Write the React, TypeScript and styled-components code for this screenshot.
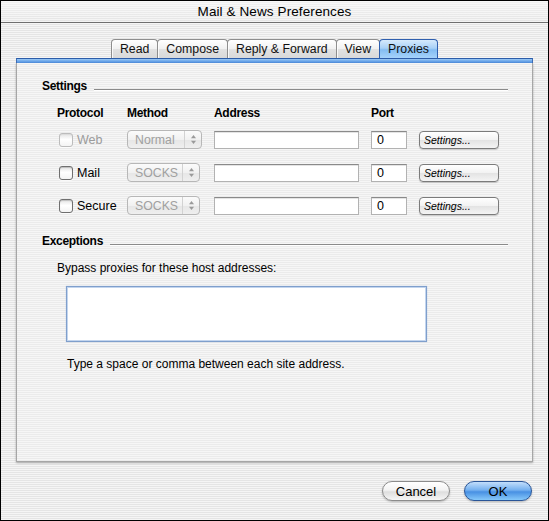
import React from "react";
import styled, { createGlobalStyle, css } from "styled-components";

const GlobalStyle = createGlobalStyle`
  html, body { margin: 0; padding: 0; background: #ffffff; }
  body { font-family: "Liberation Sans", Arial, sans-serif; color: #000; }
  * { box-sizing: border-box; }
`;

const stripes = (a: string, b: string) =>
  `repeating-linear-gradient(to bottom, ${a} 0px, ${a} 1px, ${b} 1px, ${b} 2px)`;

const Window = styled.div`
  width: 549px;
  height: 521px;
  border: 1px solid #000;
  background: ${stripes("#f5f5f5", "#e5e5e5")};
  display: flex;
  flex-direction: column;
  overflow: hidden;
`;

const TitleBar = styled.div`
  height: 22px;
  flex: 0 0 22px;
  border-bottom: 1px solid #6f6f6f;
  border-radius: 4px 4px 0 0;
  background: linear-gradient(to bottom, rgba(255, 255, 255, 0.55), rgba(255, 255, 255, 0.1)),
    ${stripes("#f2f2f2", "#e2e2e2")};
  display: flex;
  align-items: center;
  justify-content: center;
  font-size: 13.5px;
  letter-spacing: 0.1px;
`;

const Content = styled.div`
  display: flex;
  flex-direction: column;
  padding: 16px 15px 0 15px;
`;

const TabBar = styled.div`
  display: flex;
  justify-content: center;
  height: 19px;
`;

const Tab = styled.div<{ $active?: boolean }>`
  height: 19px;
  padding: 0 8px;
  margin-left: -1px;
  display: flex;
  align-items: center;
  font-size: 12.3px;
  border: 1px solid #8e8e8e;
  border-bottom: none;
  border-radius: 4px 4px 0 0;
  background: linear-gradient(to bottom, #ffffff 0%, #f1f1f1 50%, #e2e2e2 51%, #d9d9d9 100%);
  box-shadow: inset 1px 0 0 rgba(255, 255, 255, 0.8);
  color: #111;
  &:first-child {
    margin-left: 0;
  }
  ${(p) =>
    p.$active &&
    css`
      position: relative;
      z-index: 1;
      border-color: #2f5fae;
      background: linear-gradient(to bottom, #d6eafc 0%, #a9d1f7 45%, #84bdf2 55%, #a6d3fb 100%);
      box-shadow: none;
    `}
`;

const BlueStrip = styled.div`
  height: 5px;
  border-top: 1px solid #2c5ca8;
  border-left: 1px solid #3d6cb5;
  border-right: 1px solid #3d6cb5;
  background: linear-gradient(to bottom, #9ccaf5 0%, #6ea8ea 50%, #4d8bdc 100%);
`;

const Panel = styled.div`
  height: 399px;
  border: 1px solid #a6a6a6;
  border-top: none;
  background: ${stripes("#f6f6f6", "#ebebeb")};
  box-shadow: 0 1px 2px rgba(0, 0, 0, 0.28);
  padding: 16px 24px 0 25px;
  display: flex;
  flex-direction: column;
`;

const SectionHeader = styled.div<{ $gap?: number }>`
  display: flex;
  align-items: flex-start;
  height: 14px;
  line-height: 14px;
  font-size: 12px;
  font-weight: bold;
  letter-spacing: -0.3px;
  margin-top: ${(p) => p.$gap ?? 0}px;
`;

const Rule = styled.div`
  flex: 1;
  height: 1px;
  margin-top: 10px;
  margin-left: 7px;
  background: #8a8a8a;
  box-shadow: 0 1px 0 #ffffff;
`;

const Table = styled.div`
  margin-top: 10px;
  margin-left: 15px;
  display: grid;
  grid-template-columns: 70px 87px 157px 48px 80px;
  grid-template-rows: 20px repeat(3, 33px);
  align-items: center;
`;

const ColHead = styled.div`
  font-size: 12px;
  font-weight: bold;
  letter-spacing: -0.3px;
`;

const ProtocolCell = styled.label<{ $disabled?: boolean }>`
  display: flex;
  align-items: center;
  gap: 4px;
  padding-left: 2px;
  font-size: 12.5px;
  color: ${(p) => (p.$disabled ? "#9b9b9b" : "#000")};
`;

const CheckBox = styled.span<{ $disabled?: boolean }>`
  width: 14px;
  height: 14px;
  border: 1px solid ${(p) => (p.$disabled ? "#bcbcbc" : "#6f6f6f")};
  border-radius: 3px;
  background: linear-gradient(to bottom, #e4e4e4 0%, #ffffff 45%, #f4f4f4 100%);
  box-shadow: inset 0 1px 1px rgba(0, 0, 0, ${(p) => (p.$disabled ? 0.05 : 0.18)}),
    0 1px 0 rgba(255, 255, 255, 0.7);
`;

const Popup = styled.div<{ $w: number }>`
  width: ${(p) => p.$w}px;
  height: 19px;
  display: flex;
  align-items: stretch;
  border: 1px solid #b7b7b7;
  border-radius: 4px;
  background: linear-gradient(to bottom, #fbfbfb 0%, #f1f1f1 50%, #e6e6e6 51%, #efefef 100%);
  color: #a0a0a0;
  font-size: 12.3px;
`;

const PopupLabel = styled.span`
  flex: 1;
  display: flex;
  align-items: center;
  padding-left: 7px;
`;

const PopupArrows = styled.span`
  width: 17px;
  border-left: 1px solid #d2d2d2;
  display: flex;
  align-items: center;
  justify-content: center;
`;

const TextField = styled.div<{ $w: number }>`
  width: ${(p) => p.$w}px;
  height: 18px;
  background: #ffffff;
  border: 1px solid #b2b2b2;
  border-top-color: #8a8a8a;
  box-shadow: inset 0 1px 0 #e4e4e4;
  font-size: 12.5px;
  padding-left: 5px;
  display: flex;
  align-items: center;
`;

const SmallButton = styled.div`
  width: 80px;
  height: 18px;
  border: 1px solid #7b7b7b;
  border-radius: 4px;
  background: linear-gradient(to bottom, #ffffff 0%, #f2f2f2 50%, #e3e3e3 51%, #f4f4f4 100%);
  box-shadow: 0 1px 1px rgba(0, 0, 0, 0.18);
  font-size: 10.5px;
  font-style: italic;
  padding-left: 4px;
  display: flex;
  align-items: center;
`;

const Caption = styled.div<{ $top: number; $left: number }>`
  margin-top: ${(p) => p.$top}px;
  margin-left: ${(p) => p.$left}px;
  font-size: 12px;
  line-height: 14px;
`;

const HostArea = styled.div`
  margin-top: 11px;
  margin-left: 24px;
  width: 361px;
  height: 56px;
  background: #ffffff;
  border: 1px solid #7f9fcc;
  box-shadow: inset 0 0 0 1px #c3d5ee, 0 0 1px rgba(80, 120, 190, 0.4);
`;

const Footer = styled.div`
  display: flex;
  justify-content: flex-end;
  gap: 14px;
  margin-top: 19px;
  padding-right: 1px;
`;

const PillButton = styled.div<{ $primary?: boolean }>`
  width: 68px;
  height: 20px;
  border-radius: 10px;
  display: flex;
  align-items: center;
  justify-content: center;
  font-size: 13px;
  border: 1px solid #8b8b8b;
  background: linear-gradient(to bottom, #ffffff 0%, #f3f3f3 45%, #dedede 55%, #f6f6f6 100%);
  box-shadow: 0 1px 2px rgba(0, 0, 0, 0.25);
  ${(p) =>
    p.$primary &&
    css`
      border-color: #2a5597;
      background: linear-gradient(to bottom, #c2defb 0%, #74b0ef 45%, #4890e3 55%, #86c8fa 100%);
    `}
`;

const Arrows = () => (
  <svg width="7" height="11" viewBox="0 0 7 11">
    <path d="M3.5 1 L6 4.2 L1 4.2 Z" fill="#9a9a9a" />
    <path d="M3.5 10 L6 6.8 L1 6.8 Z" fill="#9a9a9a" />
  </svg>
);

const rows = [
  { name: "Web", method: "Normal", disabled: true, popupW: 75 },
  { name: "Mail", method: "SOCKS", disabled: false, popupW: 73 },
  { name: "Secure", method: "SOCKS", disabled: false, popupW: 73 },
];

const tabs = ["Read", "Compose", "Reply & Forward", "View", "Proxies"];

export default function App() {
  return (
    <>
      <GlobalStyle />
      <Window>
        <TitleBar>Mail &amp; News Preferences</TitleBar>
        <Content>
          <TabBar>
            {tabs.map((t) => (
              <Tab key={t} $active={t === "Proxies"}>
                {t}
              </Tab>
            ))}
          </TabBar>
          <BlueStrip />
          <Panel>
            <SectionHeader>
              Settings
              <Rule />
            </SectionHeader>
            <Table>
              <ColHead>Protocol</ColHead>
              <ColHead>Method</ColHead>
              <ColHead>Address</ColHead>
              <ColHead>Port</ColHead>
              <span />
              {rows.map((r) => (
                <React.Fragment key={r.name}>
                  <ProtocolCell $disabled={r.disabled}>
                    <CheckBox $disabled={r.disabled} />
                    {r.name}
                  </ProtocolCell>
                  <Popup $w={r.popupW}>
                    <PopupLabel>{r.method}</PopupLabel>
                    <PopupArrows>
                      <Arrows />
                    </PopupArrows>
                  </Popup>
                  <TextField $w={145} />
                  <TextField $w={36}>0</TextField>
                  <SmallButton>Settings...</SmallButton>
                </React.Fragment>
              ))}
            </Table>
            <SectionHeader $gap={12}>
              Exceptions
              <Rule />
            </SectionHeader>
            <Caption $top={13} $left={15}>
              Bypass proxies for these host addresses:
            </Caption>
            <HostArea />
            <Caption $top={15} $left={25}>
              Type a space or comma between each site address.
            </Caption>
          </Panel>
          <Footer>
            <PillButton>Cancel</PillButton>
            <PillButton $primary>OK</PillButton>
          </Footer>
        </Content>
      </Window>
    </>
  );
}
